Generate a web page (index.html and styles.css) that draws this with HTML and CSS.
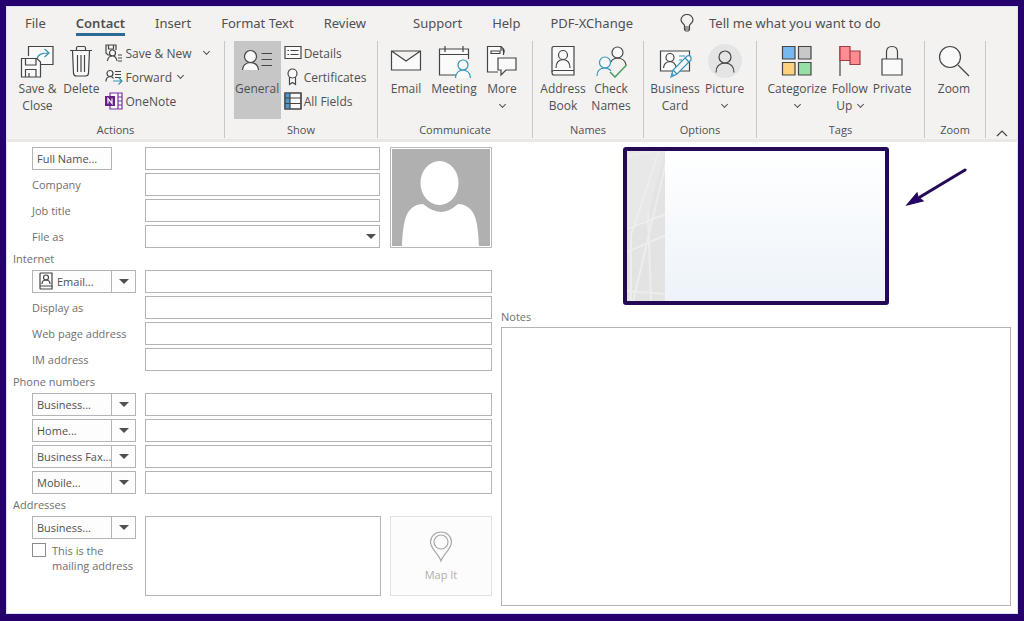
FILE: index.html
```html
<!DOCTYPE html>
<html lang="en">
<head>
<meta charset="utf-8">
<meta name="viewport" content="width=device-width, initial-scale=1">
<title>Contact</title>
<link rel="stylesheet" href="styles.css">
</head>
<body>
<div class="window">
  <header class="ribbon">
    <nav class="tabs" aria-label="Ribbon tabs">
      <button class="tab">File</button>
      <button class="tab tab-active">Contact</button>
      <button class="tab">Insert</button>
      <button class="tab">Format Text</button>
      <button class="tab tab-last">Review</button>
      <button class="tab">Support</button>
      <button class="tab">Help</button>
      <button class="tab">PDF-XChange</button>
      <button class="tab tell"><svg class="bulb" width="14" height="18" viewBox="0 0 14 18"><path d="M4.500 13V11.500C4.500 10 1 9 1 6A6 5.500 0 0 1 13 6C13 9 9.500 10 9.500 11.500V13ZM4.500 15H9.500M5.500 17H8.500M4.500 13V15.500L5.500 17M9.500 13V15.500L8.500 17"/></svg>Tell me what you want to do</button>
    </nav>
    <div class="groups">
      <section class="group">
        <div class="tools">
          <button class="big save"><svg width="34" height="34" viewBox="0 0 34 34"><path class="w" d="M8.500 12V2.500H33V20.500H21"/><path class="b" d="M17 15C18 10 22 9 29 9M24.500 5L29 9L24.500 13"/><path class="w" d="M1.500 14.500H17L20.500 18V33H1.500Z"/><path d="M5.500 14.500V21H16V14.500M5.500 33V25.500H16V33M9 29V33"/></svg>Save &amp;<br>Close</button>
          <button class="big delete"><svg width="22" height="34" viewBox="0 0 22 34"><path class="w" d="M2.500 6.500H19.500L18.500 29Q18.500 32 15.500 32H6.500Q3.500 32 3.500 29Z"/><path d="M0 6.500H22M6.500 6V4Q6.500 2.500 8 2.500H14Q15.500 2.500 15.500 4V6M7.500 11V28M11 11V28M14.500 11V28"/></svg>Delete</button>
          <div class="stack">
            <button class="small"><svg width="18" height="18" viewBox="0 0 18 18"><path d="M6 11H3L1 9V1H11V6M3.500 1V5H8.500V1"/><circle class="w" cx="7.500" cy="9" r="3"/><path class="w" d="M2.500 17Q3 12 7.500 12Q11 12 12 17M13 11H17M13 14H17M13 17H17"/></svg>Save &amp; New<i class="chev far"></i></button>
            <button class="small"><svg width="18" height="18" viewBox="0 0 18 18"><circle class="w" cx="5" cy="5.500" r="3"/><path class="w" d="M1 13.500Q1 9 5 8.500Q7.500 8.500 8.500 10.500M10 3.500H16M10 6.500H16M10 9.500H16"/><path class="b" d="M8 13H17M13.500 9.500L17 13L13.500 16.500"/></svg>Forward<i class="chev"></i></button>
            <button class="small"><svg width="18" height="18" viewBox="0 0 18 18"><path class="p" d="M5 1H17V17H5ZM13 1V17M13 5H17M13 9H17M13 13H17"/><path class="pf" d="M0 4H10V14H0Z"/><path class="n" d="M3 11.500V6.500L7 11.500V6.500"/></svg>OneNote</button>
          </div>
        </div>
        <h2>Actions</h2>
      </section>
      <section class="group">
        <div class="tools">
          <button class="big general"><svg width="34" height="34" viewBox="0 0 34 34"><circle class="w" cx="10.500" cy="12.500" r="6"/><path class="w" d="M2.500 26Q3 19 10.500 18.500Q18 19 18.500 26"/><path d="M21.500 9.500H32M21.500 15.500H32M21.500 21.500H32"/></svg>General</button>
          <div class="stack">
            <button class="small"><svg width="18" height="18" viewBox="0 0 18 18"><path class="w" d="M1 2.500H17V14.500H1Z"/><path d="M3.500 6.500H5M6.500 6.500H14.500M3.500 10.500H5M6.500 10.500H14.500"/></svg>Details</button>
            <button class="small"><svg width="18" height="18" viewBox="0 0 18 18"><path class="w" d="M5.500 9V16.500L8.500 14.500L11.500 16.500V9"/><circle class="w" cx="8.500" cy="5.500" r="4.500"/></svg>Certificates</button>
            <button class="small"><svg width="18" height="18" viewBox="0 0 18 18"><path class="w" d="M1 1H17V17H1Z"/><path class="bf" d="M1 1H6V17H1Z"/><path d="M1 6H17M1 11.500H17M6 1V17M1 1H17V17H1Z"/></svg>All Fields</button>
          </div>
        </div>
        <h2>Show</h2>
      </section>
      <section class="group">
        <div class="tools">
          <button class="big"><svg width="34" height="34" viewBox="0 0 34 34"><path class="w" d="M2.500 7H31.500V26H2.500ZM2.500 7L17 17L31.500 7"/></svg>Email</button>
          <button class="big"><svg width="34" height="34" viewBox="0 0 34 34"><path class="w" d="M2.500 5H31.500V31H2.500ZM2.500 10.500H31.500M8 2V8M26 2V8"/><path class="gap" d="M19 34V27L22 25L20 21Q21 15 26 15H33V34Z"/><circle class="wb" cx="26" cy="21" r="5"/><path class="wb" d="M18.500 34Q19 26.500 26 26Q33 26.500 33.500 34"/></svg>Meeting</button>
          <button class="big"><svg width="34" height="34" viewBox="0 0 34 34"><path class="w" d="M13 28H2.500V2.500H16L18.500 5V11"/><path d="M6 7H15V9.500H6ZM16 2.500V6H19V9"/><path class="w" d="M13 14H31V26H21L16 31V26H13Z"/></svg>More<i class="chev"></i></button>
        </div>
        <h2>Communicate</h2>
      </section>
      <section class="group">
        <div class="tools">
          <button class="big"><svg width="34" height="34" viewBox="0 0 34 34"><path class="w" d="M8 2.500H28V31H8Q6 31 6 28.500V4.500Q6 2.500 8 2.500Z"/><circle cx="17" cy="11" r="4.500"/><path d="M10 24Q10 16 17 15.500Q24 16 24 24M6 28Q6 26.500 8 26.500H28"/></svg>Address<br>Book</button>
          <button class="big"><svg width="34" height="34" viewBox="0 0 34 34"><circle class="w" cx="23.500" cy="8.500" r="5.500"/><path d="M17 18Q18 14.500 23.500 14Q31 14.500 32 21"/><circle class="wb" cx="11" cy="18.500" r="5.500"/><path class="b" d="M3 32Q3 24 11 24Q15 24 17 27"/><path class="g" d="M16 28L21 33L32.500 21"/></svg>Check<br>Names</button>
        </div>
        <h2>Names</h2>
      </section>
      <section class="group">
        <div class="tools">
          <button class="big"><svg width="34" height="34" viewBox="0 0 34 34"><path class="w" d="M2.500 7H31.500V27H2.500Z"/><circle cx="12" cy="13.500" r="4"/><path d="M5.500 24Q6 18 12 17.500Q17 18 18 23"/><path class="b" d="M21 12H27M21 16H24"/><path class="wb" d="M13 33L15 26L29 12Q32 11 33 13.500V16L19 30ZM15 26L19 30M27 14L31 18"/><path class="bf" d="M13 33L14 29L17 31.500Z"/></svg>Business<br>Card</button>
          <button class="big"><svg width="34" height="34" viewBox="0 0 34 34"><circle class="disc" cx="17" cy="17" r="17"/><circle cx="17" cy="13" r="6"/><path d="M8 28.500Q8 19.500 17 19Q26 19.500 26 28.500"/></svg>Picture<i class="chev"></i></button>
        </div>
        <h2>Options</h2>
      </section>
      <section class="group tags">
        <div class="tools">
          <button class="big"><svg width="34" height="34" viewBox="0 0 34 34"><path class="c1" d="M2.500 2.500H15V15H2.500Z"/><path class="c2" d="M18.500 2.500H31V15H18.500Z"/><path class="c3" d="M2.500 18.500H15V31H2.500Z"/><path class="c4" d="M18.500 18.500H31V31H18.500Z"/></svg>Categorize<i class="chev"></i></button>
          <button class="big"><svg width="34" height="34" viewBox="0 0 34 34"><path d="M7 2V32"/><path class="r" d="M7 2.500H17V16.500H7ZM17 7H27V20.500H17Z"/></svg>Follow<br><span>Up<i class="chev inline"></i></span></button>
          <button class="big"><svg width="34" height="34" viewBox="0 0 34 34"><path d="M11.500 15V8Q11.500 2.500 17 2.500Q22.500 2.500 22.500 8V15"/><path class="w" d="M7 15H27V31H7Z"/></svg>Private</button>
        </div>
        <h2>Tags</h2>
      </section>
      <section class="group">
        <div class="tools">
          <button class="big"><svg width="34" height="34" viewBox="0 0 34 34"><circle class="w" cx="13" cy="13" r="10.500"/><path d="M21 21L32 32"/></svg>Zoom</button>
        </div>
        <h2>Zoom</h2>
      </section>
      <button class="collapse" aria-label="Collapse ribbon"><svg width="12" height="8" viewBox="0 0 12 8"><path d="M1 7L6 2L11 7"/></svg></button>
    </div>
  </header>

  <main class="content">
    <form class="form">
      <div class="names">
        <div class="rows">
          <button type="button" class="btn" id="l1">Full Name...</button><input class="field" type="text" aria-labelledby="l1">
          <label for="company">Company</label><input class="field" type="text" id="company">
          <label for="job">Job title</label><input class="field" type="text" id="job">
          <label for="fileas">File as</label><div class="combo"><select class="field" id="fileas"><option></option></select></div>
        </div>
        <svg class="photo" width="102" height="101" viewBox="0 0 102 101" role="img" aria-label="Contact picture"><path class="photo-edge" d="M0.500 0.500H101.500V100.500H0.500Z"/><path class="photo-bg" d="M2 2H100V99H2Z"/><path class="photo-fg" d="M12 100C13 75 15 58 33 57Q43 65 51 65Q59 65 68 57C86 58 88 75 89 100Z"/><ellipse class="photo-fg" cx="49.500" cy="36" rx="19" ry="22"/></svg>
      </div>
      <h3>Internet</h3>
      <div class="rows">
        <div class="split"><button type="button" class="btn" id="l5"><svg width="14" height="18" viewBox="0 0 14 18"><path d="M2 1H13V17H2Q1 17 1 16V2Q1 1 2 1ZM1 14H13M3 12Q3 8 7 8Q11 8 11 12"/><circle cx="7" cy="5.500" r="2.500"/></svg>Email...</button><button type="button" class="drop" aria-label="Choose email"></button></div><input class="field" type="text" aria-labelledby="l5">
        <label for="display">Display as</label><input class="field" type="text" id="display">
        <label for="web">Web page address</label><input class="field" type="text" id="web">
        <label for="im">IM address</label><input class="field" type="text" id="im">
      </div>
      <h3>Phone numbers</h3>
      <div class="rows">
        <div class="split"><button type="button" class="btn" id="l9">Business...</button><button type="button" class="drop" aria-label="Choose first phone"></button></div><input class="field" type="text" aria-labelledby="l9">
        <div class="split"><button type="button" class="btn" id="l10">Home...</button><button type="button" class="drop" aria-label="Choose second phone"></button></div><input class="field" type="text" aria-labelledby="l10">
        <div class="split"><button type="button" class="btn" id="l11">Business Fax...</button><button type="button" class="drop" aria-label="Choose third phone"></button></div><input class="field" type="text" aria-labelledby="l11">
        <div class="split"><button type="button" class="btn" id="l12">Mobile...</button><button type="button" class="drop" aria-label="Choose fourth phone"></button></div><input class="field" type="text" aria-labelledby="l12">
      </div>
      <h3>Addresses</h3>
      <div class="address">
        <div>
          <div class="split"><button type="button" class="btn" id="l13">Business...</button><button type="button" class="drop" aria-label="Choose address"></button></div>
          <label class="check"><input type="checkbox"><span>This is the mailing address</span></label>
        </div>
        <textarea class="field" aria-labelledby="l13"></textarea>
        <button type="button" class="map" disabled><svg width="24" height="32" viewBox="0 0 24 32"><path d="M12 30C9 22 1.500 18 1.500 11A10.500 10 0 0 1 22.500 11C22.500 18 15 22 12 30Z"/><circle cx="12" cy="11" r="7"/></svg>Map It</button>
      </div>
    </form>
    <div class="side">
      <div class="preview">
        <svg class="card" width="266" height="158" viewBox="0 0 266 158" role="img" aria-label="Business card">
          <defs><linearGradient id="sky" x2="0" y2="1"><stop offset="0" stop-color="#fff"/><stop offset="1" stop-color="#edf3f9"/></linearGradient><clipPath id="strip"><path d="M4 4H42V154H4Z"/></clipPath></defs>
          <path fill="url(#sky)" d="M2 2H264V156H2Z"/>
          <g clip-path="url(#strip)"><path fill="#e3e3e3" d="M4 4H42V154H4Z"/><path fill="#e8e8e8" d="M4 4H42L24 72L4 80Z"/><path class="ray" d="M36 3L8 88V155M43 15L10 155M4 82L43 67M4 105L43 88M25 65L28 155M4 9L33 4M4 144L43 147"/></g>
          <rect class="frame" x="2" y="2" width="262" height="154" rx="1"/>
        </svg>
        <svg class="arrow" width="64" height="44" viewBox="0 0 64 44"><path class="shaft" d="M60 5L15 32"/><path class="head" d="M2 40L12 28L13 32L18 36Z"/></svg>
      </div>
      <label class="notes-label" for="notes">Notes</label>
      <textarea class="field notes" id="notes"></textarea>
    </div>
  </main>
</div>
</body>
</html>
```
FILE: styles.css
```css
* { box-sizing: border-box; }
body { margin: 0; min-height: 100vh; display: flex; padding: 6px 6px 7px; background: #26006c; font-family: "Open Sans", "Noto Sans", sans-serif; font-size: 12px; color: #505050; }
button, input, select, textarea { font: inherit; color: inherit; border-radius: 0; margin: 0; }
button { border: 0; background: none; padding: 0; }
h2, h3 { margin: 0; font-weight: 400; }
svg { display: block; flex: none; fill: none; stroke: #454545; stroke-width: 1.2; }
.window { flex: 1; min-width: 0; display: flex; flex-direction: column; background: #fff; border: 1px solid #dce3f5; }
.ribbon { background: #f3f2f1; border-bottom: 3px solid #e9e8e7; }
.tabs { display: flex; align-items: flex-start; gap: 30px; height: 34px; padding: 2px 17px 0 18px; font-family: "Noto Sans", "Open Sans", sans-serif; font-size: 13px; }
.tab { height: 27px; white-space: nowrap; }
.tab-active { font-weight: 600; border-bottom: 3px solid #2a6a94; padding-top: 3px; }
.tab-last { margin-right: 17px; }
.tell { display: flex; align-items: center; gap: 15px; margin-left: 17px; }
.groups { display: grid; grid-template-columns: 218fr 153fr 155fr 111fr 113fr 168fr 61fr 31fr; height: 98px; }
.group { display: flex; flex-direction: column; border-right: 1px solid #c9c8c7; margin-bottom: 4px; min-width: 0; }
.tools { display: flex; justify-content: center; height: 78px; gap: 2px; padding-right: 2px; }
.group h2 { font-size: 11px; line-height: 16px; margin-top: 3px; text-align: center; }
.big { display: flex; flex-direction: column; align-items: center; padding-top: 3px; line-height: 17px; min-width: 46px; }
.big svg { margin-bottom: 2px; }
.save, .delete { min-width: 42px; }
.general { background: #c6c6c6; min-width: 47px; }
.tags .tools { gap: 4px; }
.tags .big { min-width: 38px; }
.stack { display: flex; flex-direction: column; padding-left: 1px; }
.small { display: flex; align-items: center; gap: 2px; height: 24px; white-space: nowrap; }
.chev { width: 5px; height: 5px; border: solid #505050; border-width: 0 1px 1px 0; transform: rotate(45deg); margin: 5px; flex: none; }
.small .chev { margin: 0 4px 3px; }
.small .far { margin-left: 10px; }
.chev.inline { display: inline-block; margin: 0 0 3px 6px; }
.collapse { display: flex; justify-content: center; align-items: flex-end; padding-bottom: 5px; }
.w { fill: #fafafa; }
.b { stroke: #3494b8; }
.wb { fill: #fafafa; stroke: #3494b8; }
.gap { fill: #f3f2f1; stroke: none; }
.bf { fill: #4a9bd2; stroke: none; }
.p { stroke: #7b2fa0; fill: #fafafa; }
.pf { fill: #68218a; stroke: none; }
.n { stroke: #fff; }
.g { stroke: #4aa064; stroke-width: 1.6; }
.disc { fill: #e4e4e4; stroke: none; }
.c1 { fill: #78b8ee; }
.c2 { fill: #c8c8c8; }
.c3 { fill: #fdd27c; }
.c4 { fill: #98dfa5; }
.r { fill: #ff8c92; stroke: #a13d44; }

.content { flex: 1; display: grid; grid-template-columns: minmax(0, 485fr) minmax(0, 510fr); gap: 9px; padding: 5px 6px 7px 0; font-size: 11px; color: #6f6f6f; }
.form { display: flex; flex-direction: column; padding-left: 25px; }
.form h3 { font-size: 11px; line-height: 16px; margin: 3px 0 3px -19px; }
.names { display: grid; grid-template-columns: minmax(0, 1fr) 102px; gap: 10px; }
.rows { display: grid; grid-template-columns: 104px minmax(0, 1fr); column-gap: 9px; row-gap: 3px; align-items: center; }
.field { display: block; width: 100%; height: 23px; background: #fff; border: 1px solid #b4b4b4; padding: 0 4px; resize: none; appearance: none; }
.btn { width: 80px; height: 23px; border: 1px solid #b4b4b4; background: #fdfdfd; display: flex; align-items: center; gap: 4px; padding: 0 0 1px 4px; color: #505050; white-space: nowrap; }
.btn svg { margin-left: 2px; }
.split { display: flex; }
.drop { width: 24px; height: 23px; border: 1px solid #b4b4b4; border-left: 0; background: #fdfdfd; display: grid; place-items: center; }
.drop::before, .combo::after { content: ""; width: 0; border: solid transparent; border-width: 5px 5px 0; border-top-color: #505050; }
.combo { position: relative; }
.combo::after { position: absolute; right: 4px; top: 9px; pointer-events: none; }
.address { display: grid; grid-template-columns: 104px minmax(0, 1fr) 102px; column-gap: 9px; min-height: 80px; }
.address .field { height: 80px; }
.check { display: flex; gap: 6px; line-height: 15px; margin-top: 4px; }
.check input { appearance: none; flex: none; width: 14px; height: 14px; border: 1px solid #8c8c8c; background: #fff; }
.map { display: flex; flex-direction: column; align-items: center; justify-content: center; gap: 4px; border: 1px solid #e2e2e2; background: #fcfcfc; color: #b0b0b0; }
.map svg { stroke: #a8a8a8; }
.photo { stroke: none; }
.photo-edge { stroke: #b8b8b8; fill: #fff; stroke-width: 1; }
.photo-bg { fill: #b0b0b0; }
.photo-fg { fill: #fff; }
.side { display: flex; flex-direction: column; }
.preview { display: grid; grid-template-columns: 1fr auto 1fr; }
.card { grid-column: 2; stroke: none; }
.frame { stroke: #240a56; stroke-width: 4; }
.ray { stroke: #ededed; stroke-width: 2; }
.arrow { margin: 18px 0 0 16px; }
.shaft { stroke: #240a56; stroke-width: 3; stroke-linecap: round; }
.head { fill: #26006c; stroke: #240a56; }
.notes-label { line-height: 16px; margin: 4px 0 2px; }
.notes { flex: 1; }
```
